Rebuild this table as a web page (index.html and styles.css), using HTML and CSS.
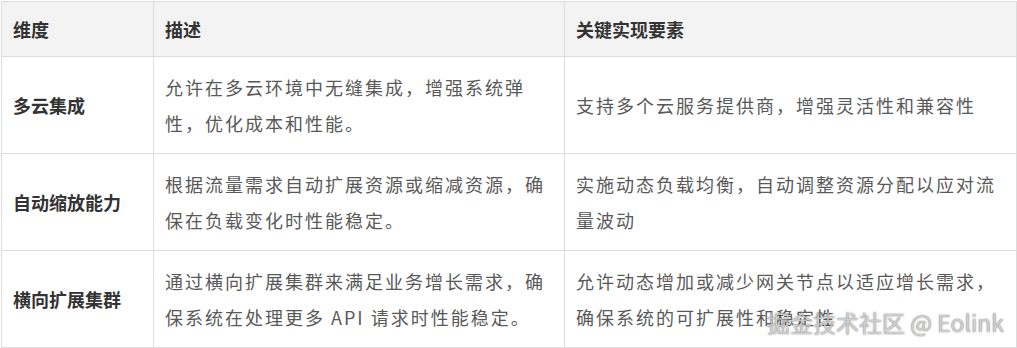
FILE: index.html
```html
<!DOCTYPE html>
<html lang="zh">
<head>
<meta charset="utf-8">
<link rel="stylesheet" href="styles.css">
</head>
<body>
<div class="wrap">
<table class="grid">
  <colgroup>
    <col class="c1"><col class="c2"><col class="c3">
  </colgroup>
  <thead>
    <tr><th>维度</th><th>描述</th><th>关键实现要素</th></tr>
  </thead>
  <tbody>
    <tr>
      <td class="dim">多云集成</td>
      <td>允许在多云环境中无缝集成，增强系统弹性，优化成本和性能。</td>
      <td>支持多个云服务提供商，增强灵活性和兼容性</td>
    </tr>
    <tr>
      <td class="dim">自动缩放能力</td>
      <td>根据流量需求自动扩展资源或缩减资源，确保在负载变化时性能稳定。</td>
      <td>实施动态负载均衡，自动调整资源分配以应对流量波动</td>
    </tr>
    <tr>
      <td class="dim">横向扩展集群</td>
      <td>通过横向扩展集群来满足业务增长需求，确保系统在处理更多 API 请求时性能稳定。</td>
      <td>允许动态增加或减少网关节点以适应增长需求，确保系统的可扩展性和稳定性</td>
    </tr>
  </tbody>
</table>
<div class="watermark">掘金技术社区 @ Eolink</div>
</div>
</body>
</html>
```
FILE: styles.css
```css
html, body {
  margin: 0;
  padding: 0;
  background: #ffffff;
}
body {
  padding: 1px 0 0 1px;
  font-family: "Noto Sans CJK SC", "Noto Sans", sans-serif;
}
.wrap {
  position: relative;
  width: 1015px;
}
.grid {
  border-collapse: collapse;
  width: 1015px;
  table-layout: fixed;
  font-size: 18px;
  letter-spacing: 2px;
  color: #595959;
}
.c1 { width: 152px; }
.c2 { width: 411px; }
.c3 { width: 452px; }
.grid th, .grid td {
  border: 1px solid #dcdcdc;
  text-align: left;
  vertical-align: middle;
  line-height: 36px;
  padding: 12px 11px;
}
.grid th {
  background: #f3f3f3;
  color: #333333;
  font-weight: 700;
  padding: 9px 11px;
  letter-spacing: 0;
}
.grid td.dim {
  color: #333333;
  font-weight: 700;
  letter-spacing: 0;
}
.watermark {
  position: absolute;
  right: 12px;
  bottom: 9px;
  font-size: 23px;
  font-family: "Noto Sans CJK SC", "Noto Sans", sans-serif;
  color: rgba(240, 240, 240, 0.75);
  text-shadow: 0 0 1px rgba(0,0,0,0.5), 0 0 2px rgba(0,0,0,0.3);
  letter-spacing: 0;
  white-space: nowrap;
}
```
